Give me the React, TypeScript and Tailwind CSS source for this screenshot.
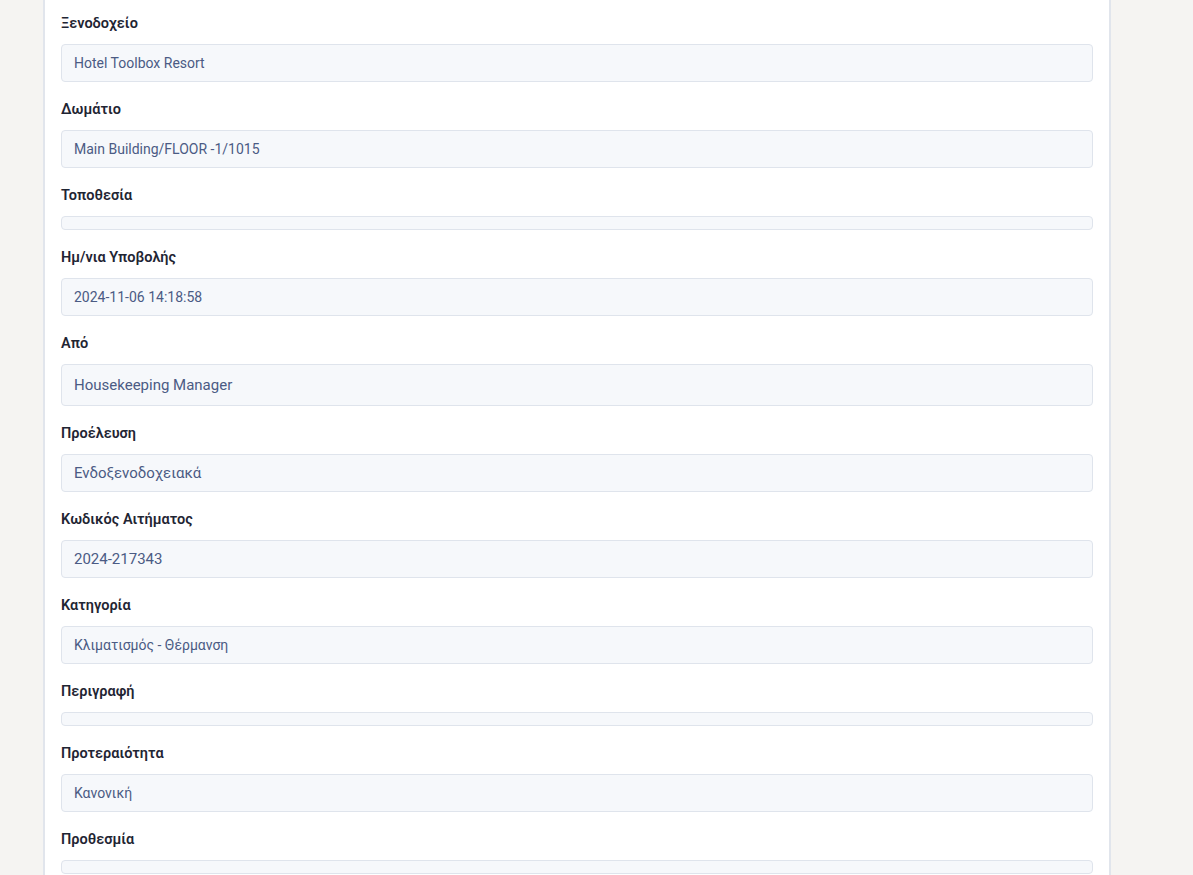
type Field = {
  label: string;
  value?: string;
  size?: 'sm' | 'md' | 'lg';
};

const fields: Field[] = [
  { label: 'Ξενοδοχείο', value: 'Hotel Toolbox Resort', size: 'sm' },
  { label: 'Δωμάτιο', value: 'Main Building/FLOOR -1/1015', size: 'sm' },
  { label: 'Τοποθεσία' },
  { label: 'Ημ/νια Υποβολής', value: '2024-11-06 14:18:58', size: 'sm' },
  { label: 'Από', value: 'Housekeeping Manager', size: 'lg' },
  { label: 'Προέλευση', value: 'Ενδοξενοδοχειακά', size: 'md' },
  { label: 'Κωδικός Αιτήματος', value: '2024-217343', size: 'md' },
  { label: 'Κατηγορία', value: 'Κλιματισμός - Θέρμανση', size: 'sm' },
  { label: 'Περιγραφή' },
  { label: 'Προτεραιότητα', value: 'Κανονική', size: 'sm' },
  { label: 'Προθεσμία' },
];

function ReadonlyField({ label, value, size }: Field) {
  return (
    <div className="mb-[18px]">
      <label className="block h-5 mb-[10px] text-[14.5px] leading-5 font-semibold text-[#1f2533]">
        {label}
      </label>
      {value === undefined ? (
        <div className="h-[14px] rounded border border-[#dfe4ec] bg-[#f6f8fb]" />
      ) : (
        <div
          className={
            size === 'lg'
              ? 'px-3 py-2 rounded border border-[#dfe4ec] bg-[#f6f8fb] text-[15px] leading-6 text-[#4b5b84]'
              : size === 'md'
                ? 'px-3 py-2 rounded border border-[#dfe4ec] bg-[#f6f8fb] text-[15px] leading-5 text-[#4b5b84]'
                : 'px-3 py-2 rounded border border-[#dfe4ec] bg-[#f6f8fb] text-[14px] leading-5 text-[#4b5b84]'
          }
        >
          {value}
        </div>
      )}
    </div>
  );
}

export default function App() {
  return (
    <div
      className="min-h-screen h-[875px] overflow-hidden bg-[#f5f4f2]"
      style={{ fontFamily: 'Roboto, "Noto Sans", sans-serif' }}
    >
      <div className="ml-[43px] w-[1068px] h-full bg-white border-x-2 border-[#e1e5ec] px-4 pt-[14px]">
        {fields.map((field) => (
          <ReadonlyField key={field.label} {...field} />
        ))}
      </div>
    </div>
  );
}
